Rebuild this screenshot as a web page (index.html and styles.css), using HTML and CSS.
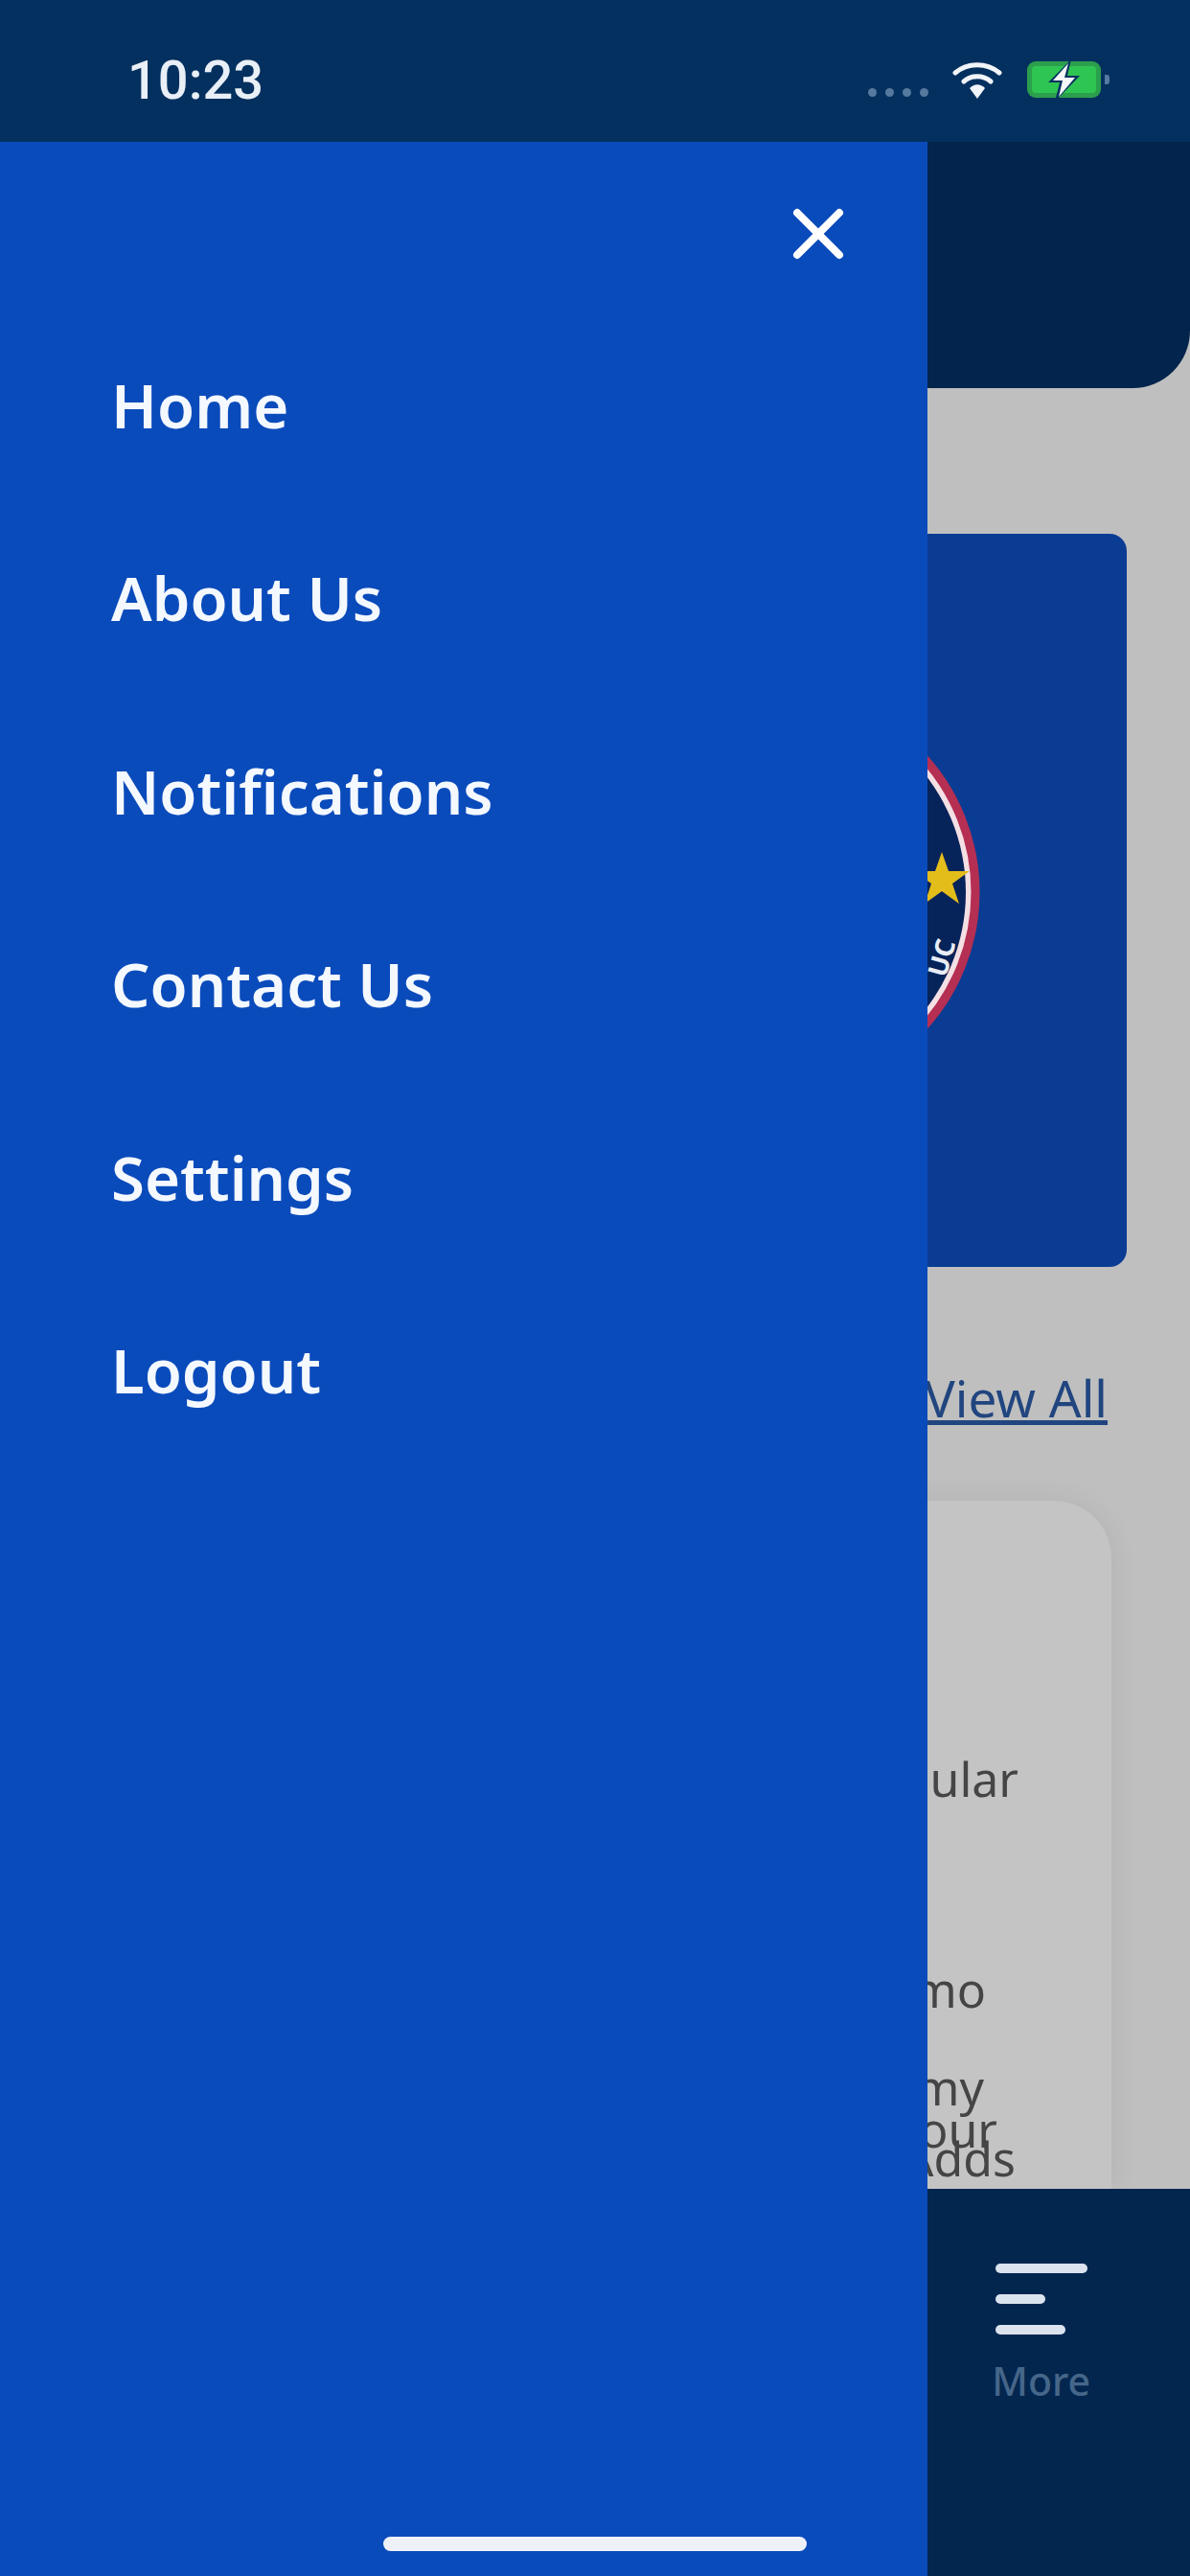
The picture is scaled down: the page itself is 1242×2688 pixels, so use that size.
FILE: index.html
```html
<!DOCTYPE html>
<html lang="en">
<head>
  <meta charset="UTF-8" />
  <meta name="viewport" content="width=device-width, initial-scale=1.0" />
  <title>Menu</title>
  <link rel="stylesheet" href="styles.css">
</head>
<body>

  <div class="phone">
    <!-- Status bar -->
    <div class="status-bar">
      <span class="time">10:23</span>
      <div class="status-icons">
        <div class="signal"><i></i><i></i><i></i><i></i></div>
        <svg class="wifi" viewBox="0 0 52 40">
          <path d="M3 13C16 2 36 2 49 13" fill="none" stroke="#f1f4f8" stroke-width="5" stroke-linecap="round"/>
          <path d="M12 22C20 15 32 15 40 22" fill="none" stroke="#f1f4f8" stroke-width="5" stroke-linecap="round"/>
          <path d="M18 29C23 24 29 24 34 29L26 40Z" fill="#f1f4f8"/>
        </svg>
        <svg class="battery" viewBox="0 0 86 38">
          <rect x="0" y="0" width="77" height="38" rx="9" fill="#2c9f4c"/>
          <rect x="5" y="5" width="67" height="28" rx="4" fill="#2fc552"/>
          <path d="M81 14h2a3 3 0 0 1 3 3v4a3 3 0 0 1-3 3h-2z" fill="#56799f"/>
          <path d="M46 -2L22 22H34L29 42L55 15H42Z" fill="#04305f"/>
          <path d="M43 2L27 20H37L33 37L50 17H39Z" fill="#f4f7fa"/>
        </svg>
      </div>
    </div>

    <!-- Page behind the menu -->
    <div class="header"></div>
    <div class="content">
      <div class="banner">
        <svg class="badge" viewBox="0 0 428 428">
          <circle cx="214" cy="214" r="209" fill="#f3dfe4"/>
          <circle cx="214" cy="214" r="209" fill="none" stroke="#b52f52" stroke-width="9"/>
          <circle cx="214" cy="214" r="199" fill="#06235a"/>
          <polygon points="388,172 395,192 417,192 399,205 406,226 388,213 370,226 377,205 359,192 381,192" fill="#e3bd1a"/>
          <text class="badge-text" x="392" y="304" transform="rotate(-74 392 304)">UC</text>
        </svg>
      </div>
      <div class="section-row">
        <a class="view-all" href="#">View All</a>
      </div>
      <div class="card">
        <div class="card-line line-popular">Popular</div>
        <div class="card-line line-promo">Promo</div>
        <div class="card-line line-my">my</div>
        <div class="card-line line-your">your</div>
        <div class="card-line line-adds">Adds</div>
      </div>
    </div>

    <!-- Bottom tab bar -->
    <div class="tab-bar">
      <div class="tab">
        <div class="more-icon"><i class="long"></i><i class="short"></i><i class="mid"></i></div>
        <span>More</span>
      </div>
    </div>

    <!-- Side menu -->
    <div class="drawer">
      <div class="drawer-top">
        <svg class="close" viewBox="0 0 60 60">
          <path d="M8 8L52 52M52 8L8 52" stroke="#fff" stroke-width="8" stroke-linecap="round"/>
        </svg>
      </div>
      <div class="menu">
        <a href="#">Home</a>
        <a href="#">About Us</a>
        <a href="#">Notifications</a>
        <a href="#">Contact Us</a>
        <a href="#">Settings</a>
        <a href="#">Logout</a>
      </div>
    </div>

    <div class="home-indicator"></div>
  </div>

</body>
</html>
```

FILE: styles.css
```css
body {
  margin: 0;
  padding: 0;
  font-family: "Noto Sans", sans-serif;
}

.phone {
  position: relative;
  width: 1242px;
  height: 2688px;
  overflow: hidden;
  background-color: #bfbfbf;
  display: flex;
  flex-direction: column;
}

/* Status bar */
.status-bar {
  height: 148px;
  flex-shrink: 0;
  background-color: #04305f;
  display: flex;
  align-items: center;
  justify-content: space-between;
  padding: 0 84px 0 133px;
  box-sizing: border-box;
}

.time {
  font-family: Roboto, sans-serif;
  font-weight: 500;
  font-size: 56px;
  padding-top: 20px;
  color: #e9eff6;
}

.status-icons {
  display: flex;
  align-items: center;
  padding-top: 18px;
}

.signal {
  display: flex;
  gap: 9px;
  margin-right: 25px;
  padding-top: 27px;
}

.signal i {
  width: 9px;
  height: 9px;
  border-radius: 50%;
  background-color: #56799f;
}

.wifi {
  width: 52px;
  height: 40px;
  margin-right: 26px;
}

.battery {
  width: 86px;
  height: 38px;
}

/* Page behind the menu */
.header {
  height: 257px;
  flex-shrink: 0;
  background-color: #03244c;
  border-bottom-right-radius: 60px;
}

.content {
  flex: 1;
  min-height: 0;
  overflow: hidden;
  display: flex;
  flex-direction: column;
  padding: 152px 66px 0 66px;
}

.banner {
  height: 765px;
  flex-shrink: 0;
  background-color: #0a3c94;
  border-radius: 18px;
  display: flex;
  justify-content: flex-end;
  align-items: center;
  padding: 0 153px 18px 0;
  box-sizing: border-box;
  overflow: hidden;
}

.badge {
  width: 428px;
  height: 428px;
}

.badge-text {
  font-family: "Noto Sans", sans-serif;
  font-weight: 700;
  font-size: 28px;
  fill: #e8edf5;
}

.section-row {
  display: flex;
  justify-content: flex-end;
  padding: 102px 20px 0 0;
}

.view-all {
  font-size: 53px;
  line-height: 70px;
  color: #21457f;
}

.card {
  flex: 1;
  margin: 72px 16px 0 0;
  background-color: #c4c4c4;
  border-radius: 60px 60px 0 0;
  box-shadow: 0 0 30px rgba(0, 0, 0, 0.07);
  display: flex;
  flex-direction: column;
  align-items: flex-end;
}

.card-line {
  font-size: 50px;
  line-height: 40px;
  color: #454545;
}

.line-popular { margin: 270px 97px 0 0; }
.line-promo   { margin: 180px 131px 0 0; }
.line-my      { margin: 62px 133px 0 0; }
.line-your    { margin: 4px 119px 0 0; }
.line-adds    { margin: -10px 100px 0 0; }

/* Bottom tab bar */
.tab-bar {
  height: 404px;
  flex-shrink: 0;
  background-color: #03264f;
  display: flex;
  justify-content: flex-end;
  padding: 78px 104px 0 0;
  box-sizing: border-box;
}

.tab {
  display: flex;
  flex-direction: column;
  align-items: center;
  font-size: 41px;
  font-weight: 500;
  line-height: 54px;
  color: #466689;
}

.more-icon {
  width: 96px;
  display: flex;
  flex-direction: column;
  gap: 22px;
  margin-bottom: 21px;
}

.more-icon i {
  display: block;
  height: 10px;
  border-radius: 5px;
  background-color: #dbe3ee;
}

.more-icon .long { width: 96px; }
.more-icon .short { width: 52px; }
.more-icon .mid { width: 73px; }

/* Side menu */
.drawer {
  position: absolute;
  top: 148px;
  left: 0;
  bottom: 0;
  width: 968px;
  background-color: #0a4bbb;
}

.drawer-top {
  display: flex;
  justify-content: flex-end;
  padding: 66px 84px 0 0;
}

.close {
  width: 60px;
  height: 60px;
}

.menu {
  display: flex;
  flex-direction: column;
  padding: 48px 0 0 116px;
}

.menu a {
  height: 201.4px;
  line-height: 201.4px;
  font-size: 63.5px;
  font-weight: 600;
  color: #f4f8ff;
  text-decoration: none;
}

.home-indicator {
  position: absolute;
  left: 400px;
  top: 2647px;
  width: 442px;
  height: 15px;
  border-radius: 8px;
  background-color: #eef2f8;
}
```
